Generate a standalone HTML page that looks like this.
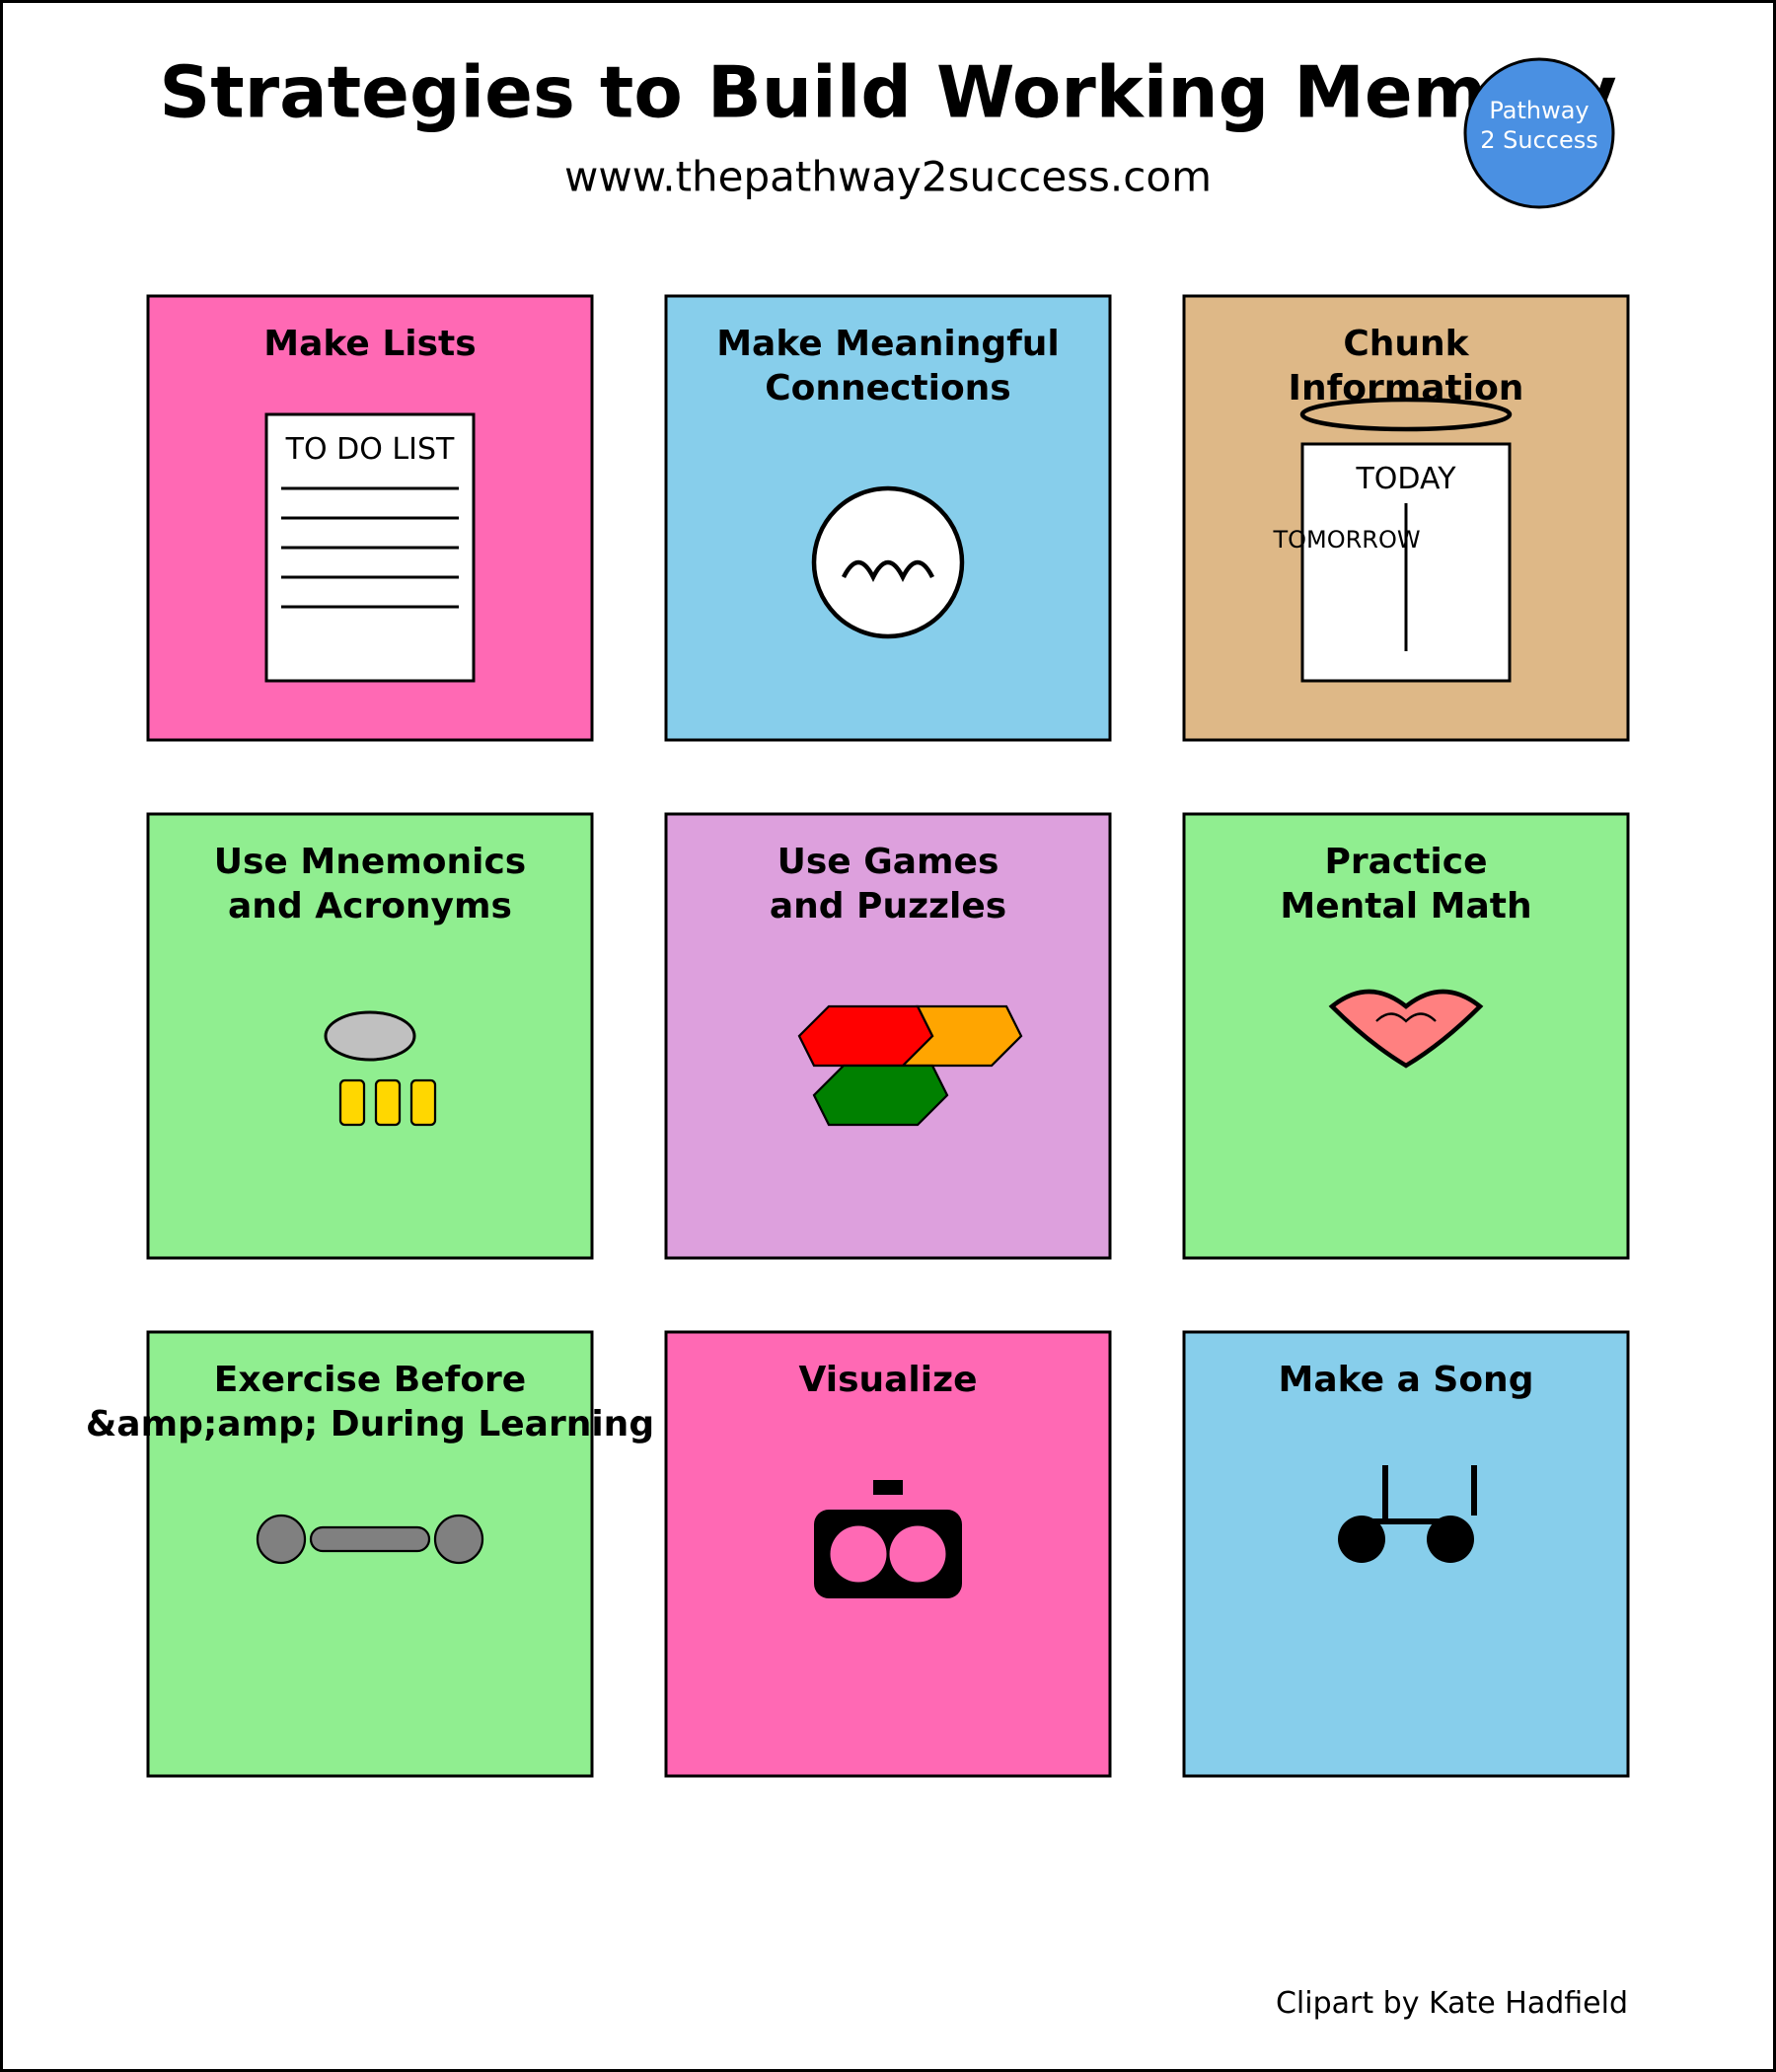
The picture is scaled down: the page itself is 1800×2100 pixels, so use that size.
<!DOCTYPE html>
<html><head><meta charset="utf-8"><style>html,body{margin:0;padding:0;background:#fff}svg{display:block}text{font-family:"DejaVu Sans","Liberation Sans",sans-serif}</style></head>
<body>
<svg width="1800" height="2100" viewBox="0 0 1200 1400" xmlns="http://www.w3.org/2000/svg">
<rect x="1" y="1" width="1198" height="1398" fill="#fff" stroke="#000" stroke-width="2"/>
<text x="600" y="79" font-size="48" font-weight="bold" text-anchor="middle">Strategies to Build Working Memory</text>
<text x="600" y="129" font-size="28" text-anchor="middle">www.thepathway2success.com</text>
<circle cx="1040" cy="90" r="50" fill="#4A90E2" stroke="#000" stroke-width="2"/>
<text x="1040" y="80" font-size="16" fill="#fff" text-anchor="middle">Pathway</text>
<text x="1040" y="100" font-size="16" fill="#fff" text-anchor="middle">2 Success</text>

<g stroke="#000" stroke-width="2">
<rect x="100" y="200" width="300" height="300" fill="#FF69B4"/>
<rect x="450" y="200" width="300" height="300" fill="#87CEEB"/>
<rect x="800" y="200" width="300" height="300" fill="#DEB887"/>
<rect x="100" y="550" width="300" height="300" fill="#90EE90"/>
<rect x="450" y="550" width="300" height="300" fill="#DDA0DD"/>
<rect x="800" y="550" width="300" height="300" fill="#90EE90"/>
<rect x="100" y="900" width="300" height="300" fill="#90EE90"/>
<rect x="450" y="900" width="300" height="300" fill="#FF69B4"/>
<rect x="800" y="900" width="300" height="300" fill="#87CEEB"/>
</g>
<g font-size="24" font-weight="bold" text-anchor="middle">
<text x="250" y="240">Make Lists</text>
<text x="600" y="240">Make Meaningful</text><text x="600" y="270">Connections</text>
<text x="950" y="240">Chunk</text><text x="950" y="270">Information</text>
<text x="250" y="590">Use Mnemonics</text><text x="250" y="620">and Acronyms</text>
<text x="600" y="590">Use Games</text><text x="600" y="620">and Puzzles</text>
<text x="950" y="590">Practice</text><text x="950" y="620">Mental Math</text>
<text x="250" y="940">Exercise Before</text><text x="250" y="970">&amp;amp;amp; During Learning</text>
<text x="600" y="940">Visualize</text>
<text x="950" y="940">Make a Song</text>
</g>

<rect x="180" y="280" width="140" height="180" fill="#fff" stroke="#000" stroke-width="2"/>
<text x="250" y="310" font-size="20" text-anchor="middle">TO DO LIST</text>
<g stroke="#000" stroke-width="2"><line x1="190" y1="330" x2="310" y2="330"/><line x1="190" y1="350" x2="310" y2="350"/><line x1="190" y1="370" x2="310" y2="370"/><line x1="190" y1="390" x2="310" y2="390"/><line x1="190" y1="410" x2="310" y2="410"/></g>

<circle cx="600" cy="380" r="50" fill="#fff" stroke="#000" stroke-width="3"/>
<path d="M570 390 Q580 370 590 390 Q600 370 610 390 Q620 370 630 390" fill="none" stroke="#000" stroke-width="3"/>

<ellipse cx="950" cy="280" rx="70" ry="10" fill="none" stroke="#000" stroke-width="3"/>
<rect x="880" y="300" width="140" height="160" fill="#fff" stroke="#000" stroke-width="2"/>
<text x="950" y="330" font-size="20" text-anchor="middle">TODAY</text>
<line x1="950" y1="340" x2="950" y2="440" stroke="#000" stroke-width="2"/>
<text x="910" y="370" font-size="16" text-anchor="middle">TOMORROW</text>

<ellipse cx="250" cy="700" rx="30" ry="16" fill="#C0C0C0" stroke="#000" stroke-width="2"/>
<g fill="#FFD700" stroke="#000" stroke-width="1.5"><rect x="230" y="730" width="16" height="30" rx="3"/><rect x="254" y="730" width="16" height="30" rx="3"/><rect x="278" y="730" width="16" height="30" rx="3"/></g>

<g stroke="#000" stroke-width="1.5">
<polygon points="620,680 680,680 690,700 670,720 610,720 630,700" fill="#FFA500"/>
<polygon points="560,680 620,680 630,700 610,720 550,720 540,700" fill="#FF0000"/>
<polygon points="570,720 630,720 640,740 620,760 560,760 550,740" fill="#008000"/>
</g>

<path d="M900 680 Q925 660 950 680 Q975 660 1000 680 Q975 705 950 720 Q925 705 900 680 Z" fill="#FF8080" stroke="#000" stroke-width="3"/>
<path d="M930 690 Q940 680 950 690 Q960 680 970 690" fill="none" stroke="#000" stroke-width="1.5"/>

<g fill="#808080" stroke="#000" stroke-width="1.5">
<rect x="210" y="1032" width="80" height="16" rx="8"/>
<circle cx="190" cy="1040" r="16"/><circle cx="310" cy="1040" r="16"/>
</g>

<rect x="550" y="1020" width="100" height="60" rx="10" fill="#000"/>
<rect x="590" y="1000" width="20" height="10" fill="#000"/>
<circle cx="580" cy="1050" r="19" fill="#FF69B4"/><circle cx="620" cy="1050" r="19" fill="#FF69B4"/>

<g fill="#000"><circle cx="920" cy="1040" r="16"/><circle cx="980" cy="1040" r="16"/></g>
<g stroke="#000" stroke-width="4"><line x1="936" y1="990" x2="936" y2="1030"/><line x1="996" y1="990" x2="996" y2="1024"/><line x1="920" y1="1028" x2="980" y2="1028"/></g>

<text x="1100" y="1360" font-size="20" text-anchor="end">Clipart by Kate Hadfield</text>
</svg>
</body></html>
